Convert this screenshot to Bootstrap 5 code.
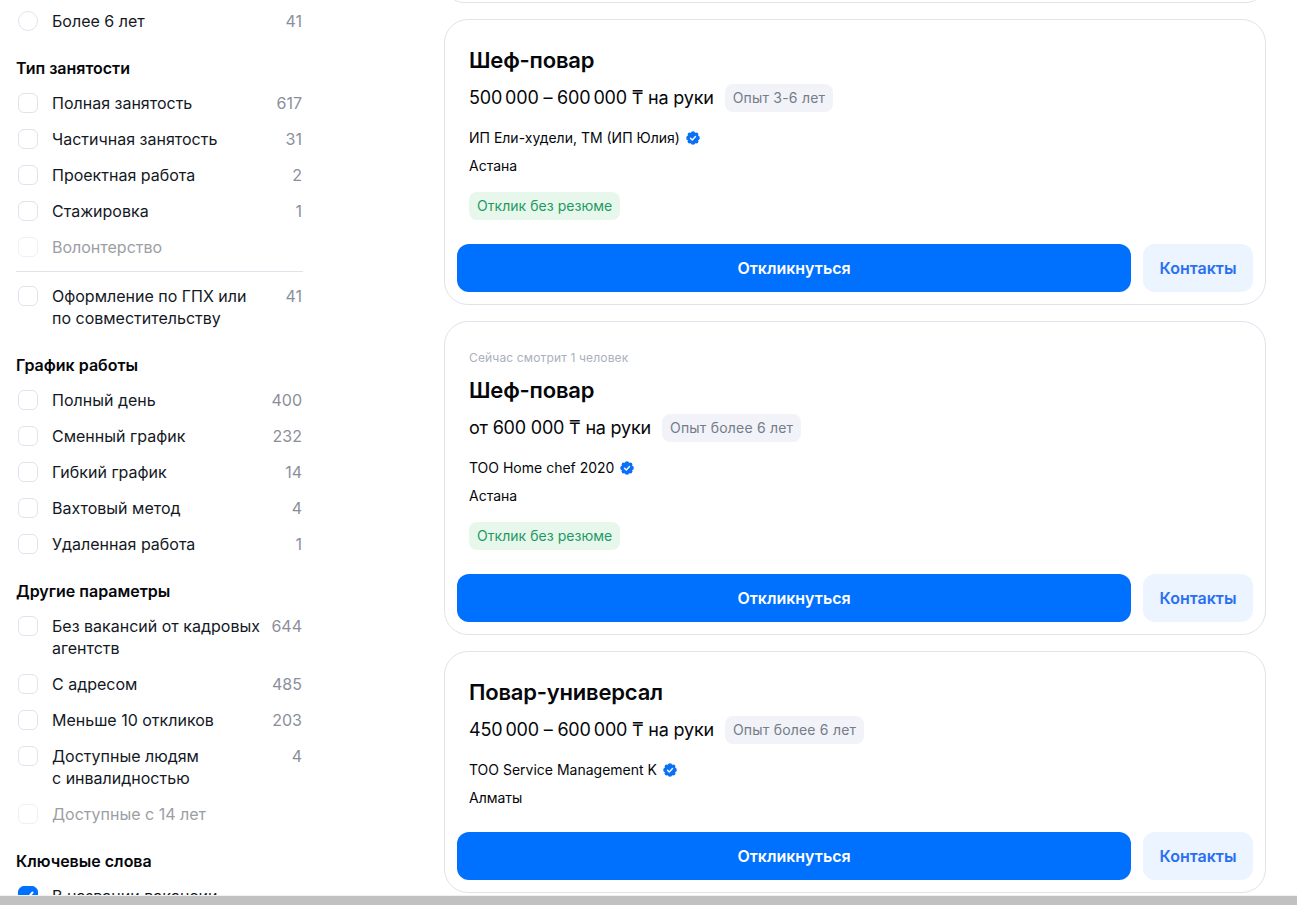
<!DOCTYPE html>
<html lang="ru">
<head>
<meta charset="utf-8">
<title>Вакансии</title>
<link href="https://cdn.jsdelivr.net/npm/bootstrap@5.3.0/dist/css/bootstrap.min.css" rel="stylesheet">
<style>
html,body{height:905px;overflow:hidden;background:#fff}
body{font-family:Inter,"Noto Sans",sans-serif;color:#05070b;font-size:16px;line-height:22px}
.viewport{height:905px}
.page{flex:1 1 auto;min-height:0;overflow:hidden;padding-top:3px}
.hscroll{height:10px;flex:none;background:#c1c1c1;border-top:1px solid #f1f1f1}
.side{width:287px;margin-left:16px;flex:none}
.main{width:822px;margin-left:141px;flex:none}
.ftitle{font-size:16px;font-weight:600;line-height:22px;margin:18px 0 6px;color:#05070b}
.frow{padding:7px 0;display:flex;color:#14181f}
.cbox{width:20px;height:20px;flex:none;margin:1px 14px 0 2px;border:1px solid #dfe3ec;border-radius:6px;background:#fff}
.cbox.round{border-radius:50%}
.cbox.on{background:#0070ff;border-color:#0070ff;display:flex;align-items:center;justify-content:center}
.fcount{margin-left:auto;color:#8b8f9b;padding-left:6px;padding-right:1px}
.off{color:#9c9ea4}
.off .cbox{border-color:#eef0f5}
.sep{height:1px;background:#dfe3ec;margin:6px 0}
.stub{height:40px;margin-top:-40px;border:1px solid #dfe3ec;border-radius:24px;margin-bottom:16px}
.vac{border:1px solid #dfe3ec;border-radius:24px;padding:26px 12px 12px;margin-bottom:16px;background:#fff}
.vac-in{padding:0 12px}
.watch{font-size:12px;line-height:20px;color:#aab0bd;margin-bottom:8px;letter-spacing:.15px}
.vname{font-size:22px;line-height:28px;font-weight:600;color:#05070b;margin:0 0 10px;letter-spacing:-.2px}
.pay{font-size:18px;line-height:28px;color:#05070b;letter-spacing:-.2px}
.exp{font-size:14px;line-height:28px;height:28px;padding:0 8px;border-radius:8px;background:#f1f3f8;color:#757c8a;margin-left:11px;letter-spacing:.2px}
.firm{font-size:14px;line-height:20px;margin-top:16px;color:#05070b}
.town{font-size:14px;line-height:20px;margin-top:8px;color:#05070b}
.tagg{display:inline-block;font-size:14px;line-height:28px;height:28px;padding:0 8px;border-radius:8px;background:#e8f7ec;color:#1c9a63;margin-top:16px;letter-spacing:.04px}
.acts{margin-top:24px;gap:12px}
.go{flex:1 1 auto;height:48px;border-radius:12px;background:#0070ff;color:#fff;font-weight:600;font-size:16px;border:0}
.go:hover{background:#0070ff;color:#fff}
.ask{width:110px;flex:none;height:48px;border-radius:12px;background:#ebf4ff;color:#2a6ff0;font-weight:600;font-size:16px;border:0;padding:0}
.ask:hover{background:#ebf4ff;color:#2a6ff0}
.tick{vertical-align:-2px;margin-left:2px}
</style>
</head>
<body>
<svg width="0" height="0" class="d-block" aria-hidden="true"><defs>
<symbol id="verified" viewBox="0 0 14 14">
<g fill="#0a70f5"><circle cx="7" cy="7" r="5.6"/><circle cx="7" cy="2.4" r="2.2"/><circle cx="7" cy="11.6" r="2.2"/><circle cx="2.4" cy="7" r="2.2"/><circle cx="11.6" cy="7" r="2.2"/><circle cx="3.8" cy="3.8" r="2.2"/><circle cx="10.2" cy="3.8" r="2.2"/><circle cx="3.8" cy="10.2" r="2.2"/><circle cx="10.2" cy="10.2" r="2.2"/></g>
<path d="M4.5 7.2l1.8 1.7 3.2-3.4" fill="none" stroke="#fff" stroke-width="1.4" stroke-linecap="round" stroke-linejoin="round"/>
</symbol>
</defs></svg>
<div class="viewport d-flex flex-column">
<div class="page d-flex align-items-start">
  <aside class="side">
    <div class="frow"><span class="cbox round"></span><span>Более 6 лет</span><span class="fcount">41</span></div>

    <div class="ftitle">Тип занятости</div>
    <div class="frow"><span class="cbox"></span><span>Полная занятость</span><span class="fcount">617</span></div>
    <div class="frow"><span class="cbox"></span><span>Частичная занятость</span><span class="fcount">31</span></div>
    <div class="frow"><span class="cbox"></span><span>Проектная работа</span><span class="fcount">2</span></div>
    <div class="frow"><span class="cbox"></span><span>Стажировка</span><span class="fcount">1</span></div>
    <div class="frow off"><span class="cbox"></span><span>Волонтерство</span></div>
    <div class="sep"></div>
    <div class="frow"><span class="cbox"></span><span>Оформление по ГПХ или<br>по совместительству</span><span class="fcount">41</span></div>

    <div class="ftitle">График работы</div>
    <div class="frow"><span class="cbox"></span><span>Полный день</span><span class="fcount">400</span></div>
    <div class="frow"><span class="cbox"></span><span>Сменный график</span><span class="fcount">232</span></div>
    <div class="frow"><span class="cbox"></span><span>Гибкий график</span><span class="fcount">14</span></div>
    <div class="frow"><span class="cbox"></span><span>Вахтовый метод</span><span class="fcount">4</span></div>
    <div class="frow"><span class="cbox"></span><span>Удаленная работа</span><span class="fcount">1</span></div>

    <div class="ftitle">Другие параметры</div>
    <div class="frow"><span class="cbox"></span><span>Без вакансий от кадровых<br>агентств</span><span class="fcount">644</span></div>
    <div class="frow"><span class="cbox"></span><span>С адресом</span><span class="fcount">485</span></div>
    <div class="frow"><span class="cbox"></span><span>Меньше 10 откликов</span><span class="fcount">203</span></div>
    <div class="frow"><span class="cbox"></span><span>Доступные людям<br>с инвалидностью</span><span class="fcount">4</span></div>
    <div class="frow off"><span class="cbox"></span><span>Доступные с 14 лет</span></div>

    <div class="ftitle">Ключевые слова</div>
    <div class="frow"><span class="cbox on"><svg width="14" height="14" viewBox="0 0 14 14"><path d="M2.5 7.5l3 3 6-7" fill="none" stroke="#fff" stroke-width="2" stroke-linecap="round" stroke-linejoin="round"/></svg></span><span>В названии вакансии</span></div>
  </aside>

  <main class="main">
    <div class="stub"></div>

    <article class="vac">
      <div class="vac-in">
        <h2 class="vname">Шеф-повар</h2>
        <div class="d-flex align-items-center"><span class="pay">500&#8201;000 – 600&#8201;000 ₸ на руки</span><span class="exp">Опыт 3-6 лет</span></div>
        <div class="firm">ИП Ели-худели, ТМ (ИП Юлия) <svg class="tick" width="14" height="14"><use href="#verified"/></svg></div>
        <div class="town">Астана</div>
        <span class="tagg">Отклик без резюме</span>
      </div>
      <div class="acts d-flex"><button class="btn go">Откликнуться</button><button class="btn ask">Контакты</button></div>
    </article>

    <article class="vac">
      <div class="vac-in">
        <div class="watch">Сейчас смотрит 1 человек</div>
        <h2 class="vname">Шеф-повар</h2>
        <div class="d-flex align-items-center"><span class="pay">от 600&nbsp;000 ₸ на руки</span><span class="exp">Опыт более 6 лет</span></div>
        <div class="firm">ТОО Home chef 2020 <svg class="tick" width="14" height="14"><use href="#verified"/></svg></div>
        <div class="town">Астана</div>
        <span class="tagg">Отклик без резюме</span>
      </div>
      <div class="acts d-flex"><button class="btn go">Откликнуться</button><button class="btn ask">Контакты</button></div>
    </article>

    <article class="vac">
      <div class="vac-in">
        <h2 class="vname">Повар-универсал</h2>
        <div class="d-flex align-items-center"><span class="pay">450&#8201;000 – 600&#8201;000 ₸ на руки</span><span class="exp">Опыт более 6 лет</span></div>
        <div class="firm">ТОО Service Management K <svg class="tick" width="14" height="14"><use href="#verified"/></svg></div>
        <div class="town">Алматы</div>
      </div>
      <div class="acts d-flex"><button class="btn go">Откликнуться</button><button class="btn ask">Контакты</button></div>
    </article>
  </main>
</div>
<div class="hscroll"></div>
</div>
</body>
</html>
